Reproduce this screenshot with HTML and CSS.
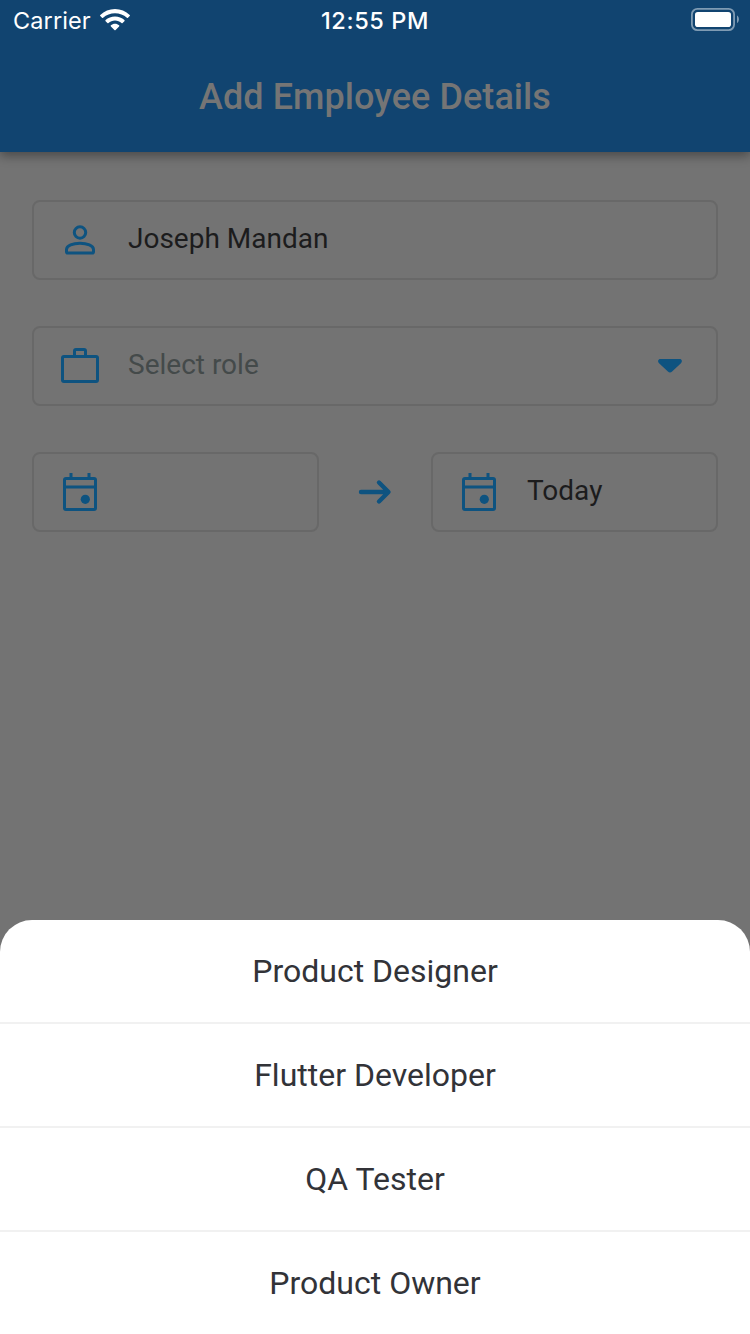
FILE: index.html
```html
<!DOCTYPE html>
<html lang="en">
<head>
<meta charset="utf-8">
<title>Add Employee Details</title>
<link rel="stylesheet" href="styles.css">
</head>
<body>
<div class="screen">
  <header class="app-bar">
    <div class="status-bar">
      <div class="status-left">
        <span class="carrier">Carrier</span>
        <svg class="wifi" width="30" height="23" viewBox="0 0 30 23" fill="#fff">
          <path d="M15 0C9.400 0 4.200 2.200.3 5.900q-.6.600 0 1.200l1.700 1.700q.5.500 1.100 0C6.300 5.800 10.500 4.200 15 4.200s8.700 1.600 11.900 4.600q.6.500 1.100 0l1.700-1.700q.6-.6 0-1.200C25.800 2.200 20.600 0 15 0Z"/>
          <path d="M15 7.500c-3.600 0-6.900 1.400-9.400 3.600q-.6.600 0 1.200l1.800 1.800q.5.500 1.100 0c1.700-1.600 4-2.500 6.500-2.500s4.800.9 6.500 2.500q.6.500 1.100 0l1.800-1.800q.6-.6 0-1.200C21.900 8.900 18.600 7.500 15 7.500Z"/>
          <path d="M15 14.700c-1.600 0-3 .6-4.100 1.500q-.6.600 0 1.200l3.500 3.600q.6.600 1.200 0l3.500-3.600q.6-.6 0-1.200c-1.100-.9-2.500-1.500-4.100-1.500Z"/>
        </svg>
      </div>
      <span class="clock">12:55 PM</span>
      <svg class="battery" width="49" height="26" viewBox="0 0 49 26">
        <rect x="1.900" y="1.900" width="42.200" height="21.200" rx="5.500" fill="none" stroke="#7f9bb3" stroke-width="1.800"/>
        <rect x="5" y="5" width="36" height="15" rx="2.800" fill="#fff"/>
        <path d="M47 8.500c2.500 1.200 2.500 6.300 0 7.500Z" fill="#7f9bb3"/>
      </svg>
    </div>
    <h1 class="title">Add Employee Details</h1>
  </header>

  <main class="form">
    <div class="field">
      <svg class="icon" width="40" height="40" viewBox="0 0 40 40" fill="none" stroke="#0e5380" stroke-width="3">
        <circle cx="20" cy="12.500" r="5.700"/>
        <path d="M6.500 29.500c0-4 6.500-6.300 13.500-6.300s13.500 2.300 13.500 6.300v2.200q0 1.300-1.300 1.300H7.800q-1.300 0-1.300-1.300Z"/>
      </svg>
      <span class="value">Joseph Mandan</span>
    </div>
    <div class="field">
      <svg class="icon" width="40" height="40" viewBox="0 0 40 40" fill="none" stroke="#0e5380" stroke-width="3">
        <rect x="2.500" y="10.500" width="35" height="25" rx="1.500"/>
        <path d="M14.500 10.500V5q0-1.500 1.500-1.500h8q1.500 0 1.500 1.500v5.500"/>
      </svg>
      <span class="value placeholder">Select role</span>
      <svg class="caret" width="26" height="16" viewBox="0 0 26 16">
        <path d="M3.500 1h19c2.600 0 3.200 2.800 1.200 4.500l-8.600 8q-2.100 1.800-4.200 0L2.300 5.500C.3 3.800.9 1 3.500 1Z" fill="#0e5380"/>
      </svg>
    </div>
    <div class="dates">
      <div class="field">
        <svg class="icon" width="40" height="40" viewBox="0 0 40 40" fill="none" stroke="#0e5380" stroke-width="3">
          <rect x="4.500" y="6.500" width="31" height="31" rx="1.500"/>
          <path d="M4.500 15h31M11 6.500V1M29 6.500V1"/>
          <circle cx="25.300" cy="27.300" r="4.600" fill="#0e5380" stroke="none"/>
        </svg>
      </div>
      <svg class="arrow" width="34" height="26" viewBox="0 0 34 26" fill="none" stroke="#0e5380" stroke-width="4.400" stroke-linecap="round" stroke-linejoin="round">
        <path d="M3 13h27M21 3.500l9.500 9.500-9.500 9.500"/>
      </svg>
      <div class="field">
        <svg class="icon" width="40" height="40" viewBox="0 0 40 40" fill="none" stroke="#0e5380" stroke-width="3">
          <rect x="4.500" y="6.500" width="31" height="31" rx="1.500"/>
          <path d="M4.500 15h31M11 6.500V1M29 6.500V1"/>
          <circle cx="25.300" cy="27.300" r="4.600" fill="#0e5380" stroke="none"/>
        </svg>
        <span class="value">Today</span>
      </div>
    </div>
  </main>

  <ul class="sheet">
    <li class="option">Product Designer</li>
    <li class="option">Flutter Developer</li>
    <li class="option">QA Tester</li>
    <li class="option">Product Owner</li>
  </ul>
</div>
</body>
</html>
```

FILE: styles.css
```css
* { box-sizing: border-box; }
body { margin: 0; background: #737373; }
.screen {
  width: 750px;
  height: 1334px;
  display: flex;
  flex-direction: column;
  overflow: hidden;
  background: #737373;
  font-family: Roboto, "Liberation Sans", sans-serif;
  white-space: nowrap;
}
svg { display: block; flex: none; }

.app-bar {
  height: 152px;
  background: #114470;
  box-shadow: 0 4px 10px rgba(0, 0, 0, .36);
}
.status-bar {
  height: 40px;
  display: grid;
  grid-template-columns: 1fr auto 1fr;
  align-items: center;
  padding: 0 11px 0 11px;
  color: #fff;
  font-family: Inter, sans-serif;
  font-size: 23.500px;
}
.status-left { display: flex; align-items: center; gap: 9px; padding-left: 2px; }
.carrier { letter-spacing: .1px; }
.clock { font-weight: 500; letter-spacing: .6px; }
.battery { justify-self: end; }
.title {
  margin: 0;
  height: 112px;
  line-height: 114px;
  text-align: center;
  font-size: 36px;
  font-weight: 500;
  letter-spacing: .06px;
  color: #757575;
}

.form {
  display: flex;
  flex-direction: column;
  gap: 46px;
  padding: 48px 32px 0;
}
.field {
  height: 80px;
  display: flex;
  align-items: center;
  padding: 0 33px 0 26px;
  border: 2px solid #686868;
  border-radius: 8px;
}
.value {
  margin-left: 28px;
  padding-bottom: 3px;
  font-size: 28px;
  line-height: 32px;
  color: #1c1c1d;
}
.placeholder { color: #444a4a; }
.caret { margin-left: auto; }
.dates {
  display: grid;
  grid-template-columns: 287px 1fr 287px;
  align-items: center;
  justify-items: center;
}
.dates .field { width: 100%; }

.sheet {
  list-style: none;
  margin: auto 0 0;
  padding: 0;
  height: 414px;
  flex: none;
  background: #fff;
  border-radius: 32px 32px 0 0;
}
.option {
  height: 104px;
  line-height: 102px;
  border-bottom: 2px solid #f1f1f1;
  text-align: center;
  font-size: 32px;
  color: #323338;
}
.option:last-child { border-bottom: 0; }
```
